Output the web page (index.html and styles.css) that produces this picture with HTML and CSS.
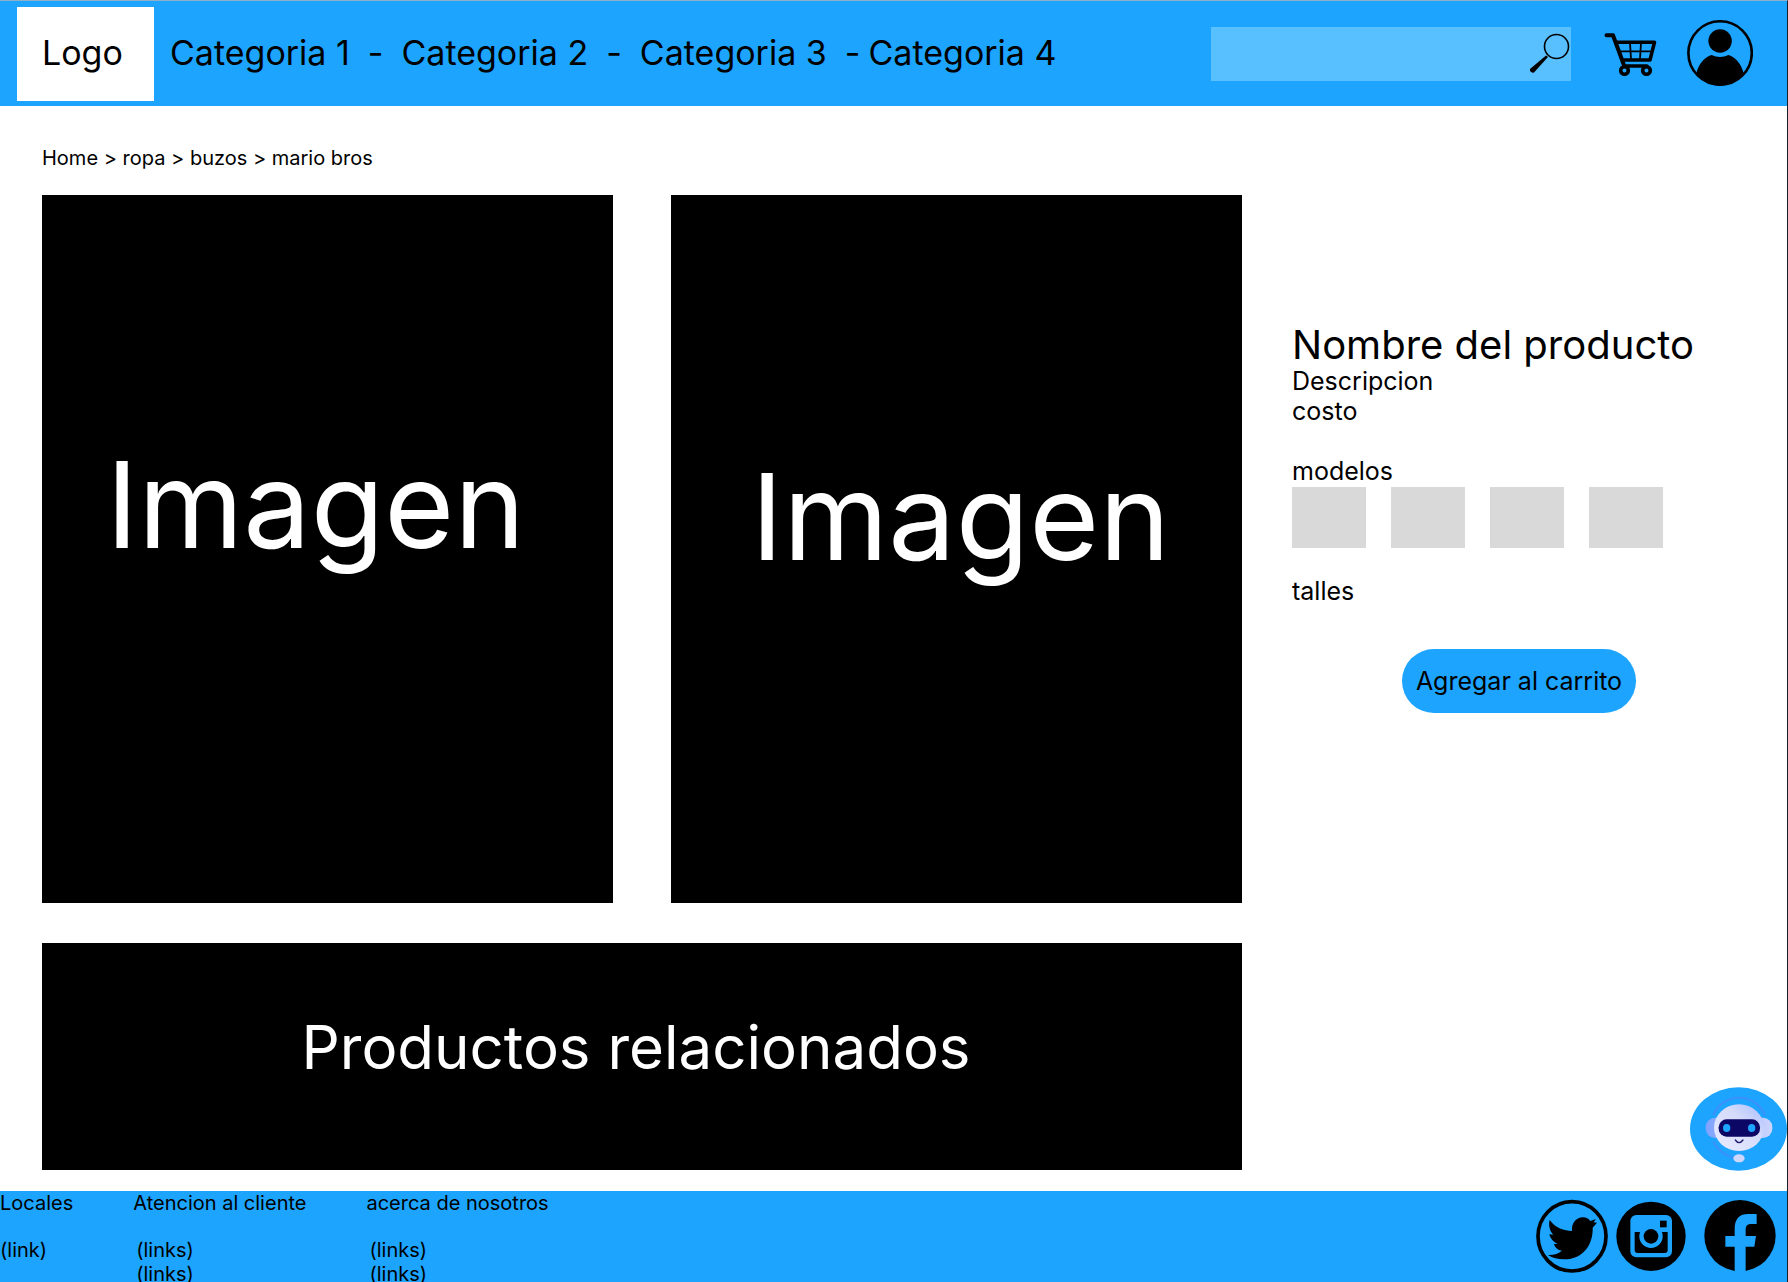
FILE: index.html
```html
<!DOCTYPE html>
<html lang="es">
<head>
<meta charset="utf-8">
<meta name="viewport" content="width=device-width, initial-scale=1">
<title>Nombre del producto</title>
<link rel="stylesheet" href="styles.css">
</head>
<body>
<header class="header">
  <a class="logo" href="#">Logo</a>
  <nav class="nav" aria-label="Categorias">
    <a href="#">Categoria 1</a><span class="separator">-</span>
    <a href="#">Categoria 2</a><span class="separator">-</span>
    <a href="#">Categoria 3</a><span class="separator separator-last">-</span>
    <a href="#">Categoria 4</a>
  </nav>
  <form class="search">
    <input class="search-input" type="search" aria-label="Buscar">
    <button class="icon-button" type="submit" aria-label="Buscar">
      <svg width="42" height="44" viewBox="1528 31 42 44"><circle cx="1556.500" cy="45.500" r="12" fill="none" stroke="#000" stroke-width="1.600"/><path d="M1546 54.500l2 1.500-14 15.500q-2 .8-4-1.500v-2z"/></svg>
    </button>
  </form>
  <a class="cart" href="#" aria-label="Carrito">
    <svg width="56" height="48" viewBox="1603 29 56 48" fill="none" stroke="#000" stroke-linecap="round" stroke-linejoin="round"><path stroke-width="4" d="M1606.500 34.300h6.500l11 30"/><path stroke-width="3.500" d="M1617 41.300h37.500l-4.500 17.700h-27M1625 65h22"/><path stroke-width="1.800" d="M1620 50.300h32M1630 42l1 16M1641 42l-1 16"/><circle cx="1624.500" cy="69.500" r="3.800" stroke-width="3.600"/><circle cx="1646.500" cy="69.500" r="3.800" stroke-width="3.600"/></svg>
  </a>
  <a class="user" href="#" aria-label="Mi cuenta">
    <svg width="66" height="68" viewBox="1687.500 20 66 68"><circle cx="1720.600" cy="53" r="31.700" fill="none" stroke="#000" stroke-width="2.600"/><circle cx="1720.600" cy="41" r="11.700"/><path d="M1697 73c2-9 8-16 15-18q8.500 4 17 0c7 2 13 9 15 18q-9 12-23.500 13-14.500-1-23.500-13z"/></svg>
  </a>
</header>

<main class="main">
  <nav class="breadcrumb" aria-label="Ruta"><a href="#">Home</a> &gt; <a href="#">ropa</a> &gt; <a href="#">buzos</a> &gt; <a href="#">mario bros</a></nav>
  <div class="product">
    <div class="media">
      <div class="gallery">
        <div class="image image-front">Imagen</div>
        <div class="image image-back">Imagen</div>
      </div>
      <section class="related"><h2 class="related-title">Productos relacionados</h2></section>
    </div>
    <section class="details">
      <h1 class="name">Nombre del producto</h1>
      <p>Descripcion</p>
      <p>costo</p>
      <h2 class="label models-label">modelos</h2>
      <div class="models">
        <button class="model" type="button" aria-label="Modelo 1"></button>
        <button class="model" type="button" aria-label="Modelo 2"></button>
        <button class="model" type="button" aria-label="Modelo 3"></button>
        <button class="model" type="button" aria-label="Modelo 4"></button>
      </div>
      <h2 class="label sizes-label">talles</h2>
      <button class="add" type="button">Agregar al carrito</button>
    </section>
  </div>
  <button class="bot" type="button" aria-label="Asistente">
    <svg width="97" height="84" viewBox="90 51 291 252">
      <defs>
        <linearGradient id="head" x1="1" y1="0" x2="0" y2="1"><stop offset="0" stop-color="#a9bcff"/><stop offset=".4" stop-color="#d5dcfb"/><stop offset="1" stop-color="#e9ebff"/></linearGradient>
        <linearGradient id="ears"><stop offset="0" stop-color="#7ea2ff"/><stop offset="1" stop-color="#cdd5fc"/></linearGradient>
      </defs>
      <ellipse cx="235.500" cy="177" rx="145.500" ry="125" fill="#1ca4ff"/>
      <path d="M160 135c30-68 122-70 155 0M160 215q20 38 62 48" fill="none" stroke="#3d8ffc" stroke-width="6"/>
      <rect x="137" y="143" width="200" height="61" rx="28" fill="url(#ears)"/>
      <ellipse cx="237" cy="173" rx="75" ry="70" fill="url(#head)"/>
      <rect x="176" y="148" width="124" height="52" rx="24" fill="#0c0765"/>
      <ellipse cx="200" cy="174" rx="11" ry="12" fill="#1ca4ff"/><ellipse cx="275" cy="174" rx="11" ry="12" fill="#1ca4ff"/>
      <path d="M226 210q11 16 23 0" fill="none" stroke="#22186f" stroke-width="4" stroke-linecap="round"/>
      <ellipse cx="237" cy="265" rx="17" ry="12" fill="#cdd7fd"/>
    </svg>
  </button>
</main>

<footer class="footer">
  <div class="footer-column"><h2 class="footer-title">Locales</h2><a href="#">(link)</a></div>
  <div class="footer-column footer-indent"><h2 class="footer-title">Atencion al cliente</h2><a href="#">(links)</a><a href="#">(links)</a></div>
  <div class="footer-column footer-indent"><h2 class="footer-title">acerca de nosotros</h2><a href="#">(links)</a><a href="#">(links)</a></div>
  <div class="social">
    <a href="#" aria-label="Twitter"><svg width="72" height="74" viewBox="106 57 216 222"><ellipse cx="214" cy="169" rx="102" ry="104" fill="none" stroke="#000" stroke-width="11"/><path d="M147 120C165 145 190 152 214 153C212 128 228 112 246 112C258 112 264 117 269 123L286 117L279 127L289 128L276 143C278 190 250 238 190 238C172 238 155 234 142 225C158 226 174 221 184 212C172 211 163 203 160 192L171 191C158 187 149 175 146 163L158 164C147 153 143 137 147 120Z"/></svg></a>
    <a href="#" aria-label="Instagram"><svg width="70" height="74" viewBox="346 57 210 222"><circle cx="451" cy="169" r="104"/><rect x="389" y="105" width="125" height="127" rx="18" fill="#1ca4ff"/><path d="M402 156h99v54q0 9-9 9h-81q-9 0-9-9z"/><circle cx="451" cy="169" r="35" fill="#1ca4ff"/><circle cx="451" cy="169" r="22"/><path d="M478 122h20v20h-20z"/></svg></a>
    <a class="facebook" href="#" aria-label="Facebook"><svg width="72" height="74" viewBox="613 57 216 222"><circle cx="721" cy="167" r="107"/><path fill="#1ca4ff" d="M705 279V200H677V168H705V148C705 115 720 102 745 102H771V132H755C742 132 738 138 738 150V168H769L764 200H738V279Z"/></svg></a>
  </div>
</footer>
</body>
</html>
```

FILE: styles.css
```css
* { box-sizing: border-box; }

body {
  display: flex;
  flex-direction: column;
  min-height: 100vh;
  margin: 0;
  border-top: 1px solid #8fb0c8;
  border-right: 1px solid #14212b;
  background: #fff;
  color: #000;
  font-family: Inter, "Liberation Sans", sans-serif;
  font-size: 20px;
  line-height: 24px;
}

a { color: inherit; text-decoration: none; }
h1, h2, p { margin: 0; font-weight: 400; }
svg { display: block; }
button { padding: 0; border: 0; background: none; color: inherit; font: inherit; }

.header {
  display: flex;
  align-items: center;
  height: 105px;
  padding: 0 34px 0 17px;
  background: #1ca4ff;
  font-size: 34px;
  line-height: 42px;
}

.logo {
  width: 137px;
  height: 94px;
  padding: 25px;
  background: #fff;
}

.nav {
  display: flex;
  margin: 0 auto 0 16px;
  padding-bottom: 2px;
}

.separator { margin: 0 18px; }
.separator-last { margin-right: 8px; }

.search {
  display: flex;
  align-items: center;
  width: 360px;
  height: 54px;
  padding-right: 1px;
  background: #59c0ff;
}

.search-input {
  flex: 1;
  min-width: 0;
  height: 100%;
  padding: 0 12px;
  border: 0;
  background: transparent;
  font: inherit;
  font-size: 25px;
}

.cart { margin: 0 28px 0 32px; }

.main { position: relative; flex: 1; }

.breadcrumb { padding: 40px 42px 25px; }

.product {
  display: grid;
  grid-template-columns: 1200fr 495fr;
  gap: 50px;
  padding: 0 0 21px 42px;
}

.gallery {
  display: grid;
  grid-template-columns: 1fr 1fr;
  gap: 58px;
}

.image {
  min-height: 708px;
  background: #000;
  color: #fff;
  font-size: 120px;
  line-height: 144px;
}

.image-front { padding: 238px 0 0 64px; }
.image-back { padding: 250px 0 0 80px; }

.related {
  min-height: 227px;
  margin-top: 40px;
  padding: 68px 12px 0 0;
  background: #000;
  color: #fff;
  text-align: center;
}

.related-title { font-size: 60px; line-height: 72px; }

.details {
  padding-top: 129px;
  font-size: 25px;
  line-height: 30px;
}

.name { font-size: 40px; line-height: 42px; }
.label { font-size: 25px; line-height: 30px; }
.models-label { margin: 30px 0 1px; }
.models { display: flex; gap: 25px; }

.model {
  width: 74px;
  height: 61px;
  background: #d9d9d9;
}

.sizes-label { margin-top: 28px; }

.add {
  width: 234px;
  height: 64px;
  margin: 43px 0 0 110px;
  border-radius: 32px;
  background: #1ca4ff;
}

.bot {
  position: absolute;
  right: 0;
  bottom: 20px;
}

.footer {
  display: flex;
  gap: 60px;
  height: 92px;
  overflow: hidden;
  background: #1ca4ff;
}

.footer-column { display: flex; flex-direction: column; }
.footer-title { margin-bottom: 23px; font-size: 20px; line-height: 24px; }
.footer-indent a { padding-left: 3px; }

.social {
  display: flex;
  gap: 8px;
  margin: 8px 11px 0 auto;
}

.facebook { margin-left: 10px; }
```
